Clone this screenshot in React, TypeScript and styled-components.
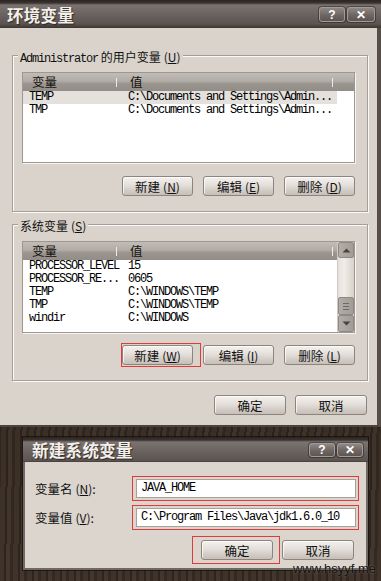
import React from 'react';
import styled, { createGlobalStyle } from 'styled-components';

const GlobalStyle = createGlobalStyle`
  html, body { margin: 0; padding: 0; background: #33281f; }
  body { font-family: "Noto Sans CJK SC", "Liberation Sans", sans-serif; }
  * { box-sizing: border-box; }
`;

const CJK = `"Noto Sans CJK SC", "Liberation Sans", sans-serif`;
const MONO = `"Liberation Mono", "Noto Sans CJK SC", monospace`;

const Page = styled.div`
  position: relative;
  width: 381px;
  height: 581px;
  overflow: hidden;
  display: flex;
  flex-direction: column;
  background:
    repeating-linear-gradient(91deg, rgba(0,0,0,0.22) 0 2px, rgba(255,255,255,0.04) 2px 6px, rgba(0,0,0,0.12) 6px 9px, rgba(255,255,255,0.02) 9px 14px),
    linear-gradient(180deg, #45362c, #34291f 60%, #3c2f26);
`;

const TopDialog = styled.div`
  height: 427px;
  display: flex;
  flex-direction: column;
`;

const TitleBar = styled.div<{ $h: number; $pl: number; $pr: number }>`
  height: ${p => p.$h}px;
  flex: none;
  display: flex;
  align-items: center;
  padding: 1px ${p => p.$pr}px 0 ${p => p.$pl}px;
  background: linear-gradient(180deg, #2b2422 0px, #3a3330 3px, #7b736f 5px, #6d6561 13px, #5b534f 24px, #3a3330 100%);
  color: #f3efeb;
  font: bold 16.5px ${CJK};
  letter-spacing: 0.3px;
  text-shadow: 1px 1px 1px rgba(0, 0, 0, 0.55);
`;

const TitleText = styled.div`
  flex: 1;
`;

const TitleButtons = styled.div`
  display: flex;
  gap: 2px;
`;

const TitleButton = styled.div<{ $w: number; $h: number }>`
  width: ${p => p.$w}px;
  height: ${p => p.$h}px;
  border: 1px solid #a39b96;
  border-radius: 3px;
  background: linear-gradient(180deg, #8f8783, #6e6662 55%, #5d5551);
  box-shadow: 0 0 0 1px rgba(0, 0, 0, 0.35);
  display: flex;
  align-items: center;
  justify-content: center;
  color: #fff;
  font: bold 12px "Liberation Sans", sans-serif;
  text-shadow: none;
`;

const Body = styled.div`
  flex: 1;
  display: flex;
  flex-direction: column;
  background: #d9d3cc;
  border-right: 4px solid #564d48;
  border-bottom: 2px solid #4b433f;
  padding: 27px 9px 10px 12px;
`;

const Group = styled.div<{ $mt: number }>`
  display: flex;
  flex-direction: column;
  margin-top: ${p => p.$mt}px;
  border: 1px solid #a59e98;
  box-shadow: inset 1px 1px 0 #fbfaf8, 1px 1px 0 #fbfaf8;
  padding: 0 12px 15px 9px;
`;

const Legend = styled.div`
  align-self: flex-start;
  margin: -8px 0 0 -4px;
  padding: 0 2px;
  height: 14px;
  line-height: 14px;
  background: #d9d3cc;
  font: 12px ${CJK};
  color: #111;
  white-space: nowrap;
`;

const MonoText = styled.span`
  font-family: ${MONO};
  letter-spacing: -1.2px;
`;

const ListBox = styled.div<{ $h: number }>`
  margin-top: 10px;
  height: ${p => p.$h}px;
  display: flex;
  background: #fff;
  border: 1px solid #9d9691;
  box-shadow: 1px 1px 0 #f7f5f3;
  overflow: hidden;
`;

const ListMain = styled.div`
  flex: 1;
  display: flex;
  flex-direction: column;
  min-width: 0;
`;

const Header = styled.div`
  height: 18px;
  flex: none;
  display: grid;
  grid-template-columns: 98px 216px 1fr;
  background: linear-gradient(180deg, #c2bcb7 0%, #b2aca7 45%, #9a948f 60%, #938d88 100%);
`;

const HeaderCell = styled.div<{ $sep?: boolean }>`
  padding-left: 9px;
  font: 12.5px/18px ${CJK};
  color: #161310;
  background: ${p =>
    p.$sep ? 'linear-gradient(#eeeae6, #eeeae6) right 4px center / 1px 9px no-repeat' : 'none'};
`;

const Row = styled.div<{ $sel?: boolean }>`
  width: 314px;
  height: 13px;
  display: grid;
  grid-template-columns: 98px 216px;
  background: ${p => (p.$sel ? '#e4e0dc' : 'transparent')};
  font: 12px/13px ${MONO};
  letter-spacing: -1.2px;
  color: #000;
`;

const Cell = styled.div<{ $pl: number }>`
  padding-left: ${p => p.$pl}px;
  white-space: nowrap;
  overflow: hidden;
`;

const ScrollBar = styled.div`
  width: 17px;
  flex: none;
  display: flex;
  flex-direction: column;
  background: linear-gradient(90deg, #e6e1dc, #f0ece8 40%, #d8d1ca);
  border-left: 1px solid #cfc9c3;
`;

const ScrollBtn = styled.div<{ $h: number }>`
  height: ${p => p.$h}px;
  flex: none;
  display: flex;
  align-items: center;
  justify-content: center;
  background: linear-gradient(90deg, #b3ada8, #a29c97);
  border: 1px solid #8f8984;
  border-radius: 2px;
`;

const ScrollTrack = styled.div`
  flex: 1;
`;

const GripLines = styled.div`
  width: 6px;
  height: 7px;
  background: repeating-linear-gradient(180deg, #6f6964 0 1px, transparent 1px 3px);
`;

const ButtonRow = styled.div<{ $mt: number; $mr?: number }>`
  display: flex;
  justify-content: flex-end;
  align-items: center;
  gap: 10px;
  margin-top: ${p => p.$mt}px;
  margin-right: ${p => p.$mr ?? 0}px;
`;

const Btn = styled.div<{ $w?: number }>`
  width: ${p => p.$w ?? 71}px;
  height: 20px;
  flex: none;
  display: flex;
  align-items: center;
  justify-content: center;
  border: 1px solid #8b847f;
  border-radius: 3px;
  background: linear-gradient(180deg, #f4f1ee 0%, #e4dfda 45%, #d2ccc6 75%, #c6bfb8 100%);
  box-shadow: inset 1px 1px 0 rgba(255, 255, 255, 0.7);
  font: 12.5px ${CJK};
  color: #111;
  white-space: nowrap;
`;

const Mnemonic = styled.span`
  margin-left: 3px;
  font-size: 12px;
`;

const Highlight = styled.div<{ $pad: string; $m: string }>`
  display: flex;
  border: 1px solid #e23a3a;
  padding: ${p => p.$pad};
  margin: ${p => p.$m};
`;

const Dialog2 = styled.div`
  width: 345px;
  height: 133px;
  margin: 10px 0 0 23px;
  display: flex;
  flex-direction: column;
  box-shadow: 0 0 0 1px rgba(0, 0, 0, 0.5);
`;

const Body2 = styled.div`
  flex: 1;
  display: flex;
  flex-direction: column;
  background: #dbd5ce;
  border: 2px solid #6f6863;
  border-top: none;
  padding: 14px 7px 4px 10px;
`;

const FieldRow = styled.div<{ $mt: number }>`
  display: flex;
  align-items: center;
  margin-top: ${p => p.$mt}px;
`;

const FieldLabel = styled.div`
  width: 97px;
  flex: none;
  font: 12.5px ${CJK};
  color: #111;
  white-space: nowrap;
`;

const FieldBox = styled.div`
  flex: 1;
  border: 1px solid #e23a3a;
  padding: 2px 2px 2px 3px;
`;

const TextField = styled.div`
  height: 19px;
  background: #fff;
  border: 1px solid #a8a19b;
  padding-left: 4px;
  font: 12px/17px ${MONO};
  letter-spacing: -1.2px;
  color: #000;
  white-space: nowrap;
  overflow: hidden;
`;

const Watermark = styled.div`
  position: absolute;
  right: 5px;
  bottom: 5px;
  font: 13px/15px "Liberation Sans", sans-serif;
  color: #151210;
  text-shadow: 0 0 2px rgba(255, 255, 255, 0.35);
`;

const ArrowIcon = ({ down }: { down?: boolean }) => (
  <svg width="9" height="5" viewBox="0 0 9 5">
    <path d={down ? 'M0.5 0.5 L8.5 0.5 L4.5 4.5 Z' : 'M0.5 4.5 L8.5 4.5 L4.5 0.5 Z'} fill="#4a4440" />
  </svg>
);

const Label = ({ text, m }: { text: string; m: string }) => (
  <>
    {text}
    <Mnemonic>
      (<u>{m}</u>)
    </Mnemonic>
  </>
);

type Item = { name: string; value: string; sel?: boolean };

const userVars: Item[] = [
  { name: 'TEMP', value: 'C:\\Documents and Settings\\Admin...', sel: true },
  { name: 'TMP', value: 'C:\\Documents and Settings\\Admin...' },
];

const sysVars: Item[] = [
  { name: 'PROCESSOR_LEVEL', value: '15' },
  { name: 'PROCESSOR_RE...', value: '0605' },
  { name: 'TEMP', value: 'C:\\WINDOWS\\TEMP' },
  { name: 'TMP', value: 'C:\\WINDOWS\\TEMP' },
  { name: 'windir', value: 'C:\\WINDOWS' },
];

const ListHeader = () => (
  <Header>
    <HeaderCell $sep>变量</HeaderCell>
    <HeaderCell $sep>值</HeaderCell>
    <HeaderCell />
  </Header>
);

const Rows = ({ items }: { items: Item[] }) => (
  <>
    {items.map(it => (
      <Row key={it.name + it.value} $sel={it.sel}>
        <Cell $pl={6}>{it.name}</Cell>
        <Cell $pl={7}>{it.value}</Cell>
      </Row>
    ))}
  </>
);

export default function App() {
  return (
    <Page>
      <GlobalStyle />
      <TopDialog>
        <TitleBar $h={28} $pl={7} $pr={6}>
          <TitleText>环境变量</TitleText>
          <TitleButtons>
            <TitleButton $w={26} $h={15}>?</TitleButton>
            <TitleButton $w={28} $h={15}>✕</TitleButton>
          </TitleButtons>
        </TitleBar>
        <Body>
          <Group $mt={0}>
            <Legend>
              <MonoText>Administrator</MonoText> 的用户变量<Mnemonic>(<u>U</u>)</Mnemonic>
            </Legend>
            <ListBox $h={91}>
              <ListMain>
                <ListHeader />
                <Rows items={userVars} />
              </ListMain>
            </ListBox>
            <ButtonRow $mt={13}>
              <Btn><Label text="新建" m="N" /></Btn>
              <Btn><Label text="编辑" m="E" /></Btn>
              <Btn><Label text="删除" m="D" /></Btn>
            </ButtonRow>
          </Group>

          <Group $mt={12}>
            <Legend>
              系统变量<Mnemonic>(<u>S</u>)</Mnemonic>
            </Legend>
            <ListBox $h={92}>
              <ListMain>
                <ListHeader />
                <Rows items={sysVars} />
              </ListMain>
              <ScrollBar>
                <ScrollBtn $h={16}><ArrowIcon /></ScrollBtn>
                <ScrollTrack />
                <ScrollBtn $h={18}><GripLines /></ScrollBtn>
                <ScrollBtn $h={17}><ArrowIcon down /></ScrollBtn>
              </ScrollBar>
            </ListBox>
            <ButtonRow $mt={12}>
              <Highlight $pad="1px 7px 1px 0" $m="-2px -8px -2px -1px">
                <Btn><Label text="新建" m="W" /></Btn>
              </Highlight>
              <Btn><Label text="编辑" m="I" /></Btn>
              <Btn><Label text="删除" m="L" /></Btn>
            </ButtonRow>
          </Group>

          <ButtonRow $mt={14} $mr={1} style={{ gap: 9 }}>
            <Btn $w={72}>确定</Btn>
            <Btn $w={72}>取消</Btn>
          </ButtonRow>
        </Body>
      </TopDialog>

      <Dialog2>
        <TitleBar $h={25} $pl={9} $pr={5}>
          <TitleText>新建系统变量</TitleText>
          <TitleButtons>
            <TitleButton $w={26} $h={14}>?</TitleButton>
            <TitleButton $w={26} $h={14}>✕</TitleButton>
          </TitleButtons>
        </TitleBar>
        <Body2>
          <FieldRow $mt={0}>
            <FieldLabel><Label text="变量名" m="N" />:</FieldLabel>
            <FieldBox><TextField>JAVA_HOME</TextField></FieldBox>
          </FieldRow>
          <FieldRow $mt={4}>
            <FieldLabel><Label text="变量值" m="V" />:</FieldLabel>
            <FieldBox><TextField>C:\Program Files\Java\jdk1.6.0_10</TextField></FieldBox>
          </FieldRow>
          <ButtonRow $mt={6} $mr={5} style={{ gap: 2 }}>
            <Highlight $pad="3px 6px 3px 8px" $m="0">
              <Btn $w={72}>确定</Btn>
            </Highlight>
            <Btn $w={72}>取消</Btn>
          </ButtonRow>
        </Body2>
      </Dialog2>

      <Watermark>www.hsyyf.me</Watermark>
    </Page>
  );
}
